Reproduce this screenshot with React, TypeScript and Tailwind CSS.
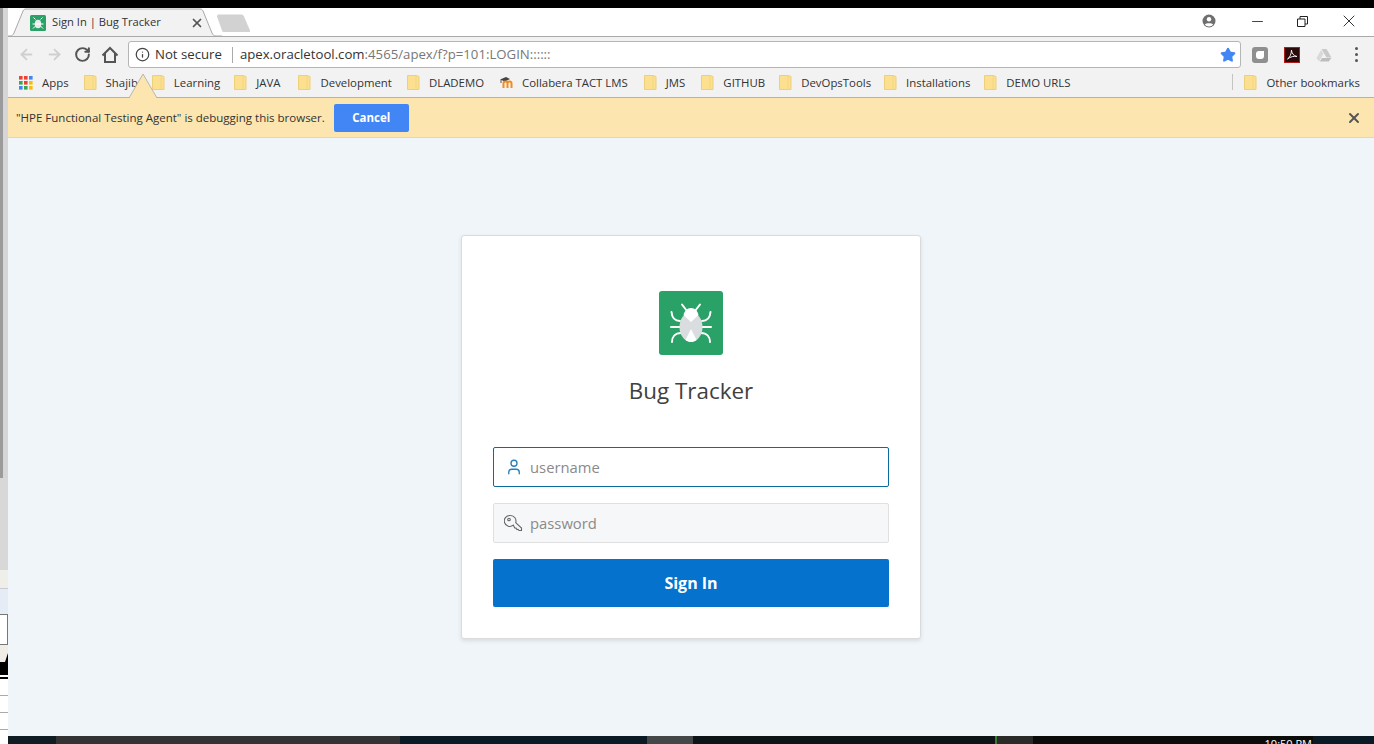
import { ArrowLeft, ArrowRight, Info, Minus, RotateCw, Star, User, X } from 'lucide-react';

const sans = 'font-["Open_Sans","Noto_Sans",sans-serif]';

const Folder = () => (
  <svg width="13" height="15" viewBox="0 0 13 15" className="shrink-0">
    <path d="M.5.5h8.500l3 1v13H.5z" fill="#fde08f" stroke="#ecd07c" />
    <path d="M9 1v13" stroke="#f3d680" fill="none" />
  </svg>
);

const AppsIcon = () => {
  const colors = ['#ea4335', '#ea4335', '#4285f4', '#34a853', '#ea4335', '#fbbc05', '#4285f4', '#34a853', '#fbbc05'];
  return (
    <svg width="14" height="14" viewBox="0 0 14 14" className="shrink-0">
      {colors.map((c, i) => (
        <rect key={i} x={(i % 3) * 5} y={Math.floor(i / 3) * 5} width="3.6" height="3.6" fill={c} />
      ))}
    </svg>
  );
};

const MoodleIcon = () => (
  <svg width="16" height="13" viewBox="0 0 16 13" className="shrink-0">
    <path d="M1 3.500 7 1l4 2-5 2.500z" fill="#444" />
    <path d="M2 4v3" stroke="#555" fill="none" />
    <path d="M4.500 12V7.500a2 2 0 0 1 4 0V12M8.500 7.500a2 2 0 0 1 4 0V12" stroke="#f28c1e" strokeWidth="2" fill="none" />
  </svg>
);

const BugLogo = () => (
  <svg width="64" height="64" viewBox="0 0 64 64" className="block">
    <rect width="64" height="64" rx="3" fill="#2aa167" />
    <g stroke="#fff" strokeWidth="2" fill="none" strokeLinecap="round">
      <path d="M28 20l-5-6.500M36 20l5-6.500" />
      <path d="M21 30c-5 0-8-3-8.500-9M43 30c5 0 8-3 8.500-9" />
      <path d="M12 36h9M43 36h9" />
      <path d="M13 51c0-5 3-9 9-9M51 51c0-5-3-9-9-9" />
    </g>
    <ellipse cx="32" cy="36" rx="11.500" ry="15" fill="#dadde0" />
    <path d="M32 17c-4 0-6.500 3-7.500 7l7.500 7 7.500-7c-1-4-3.500-7-7.500-7z" fill="#fff" />
    <path d="M32 38l-5.500 11c2 1.500 3.500 2 5.500 2s3.500-.5 5.500-2z" fill="#fff" />
  </svg>
);

const bookmarksBefore = [
  ['Shajib', 'pl-[15px]'],
  ['Learning', 'pl-[14px]'],
  ['JAVA', 'pl-[14px]'],
  ['Development', 'pl-[18px]'],
  ['DLADEMO', 'pl-[15px]'],
];

const bookmarksAfter = [
  ['JMS', 'pl-[16px]'],
  ['GITHUB', 'pl-[16px]'],
  ['DevOpsTools', 'pl-[14px]'],
  ['Installations', 'pl-[13px]'],
  ['DEMO URLS', 'pl-[14px]'],
];

export default function App() {
  return (
    <div className={`w-[1374px] h-[744px] flex flex-col overflow-hidden bg-white ${sans}`}>
      <div className="h-2 bg-black shrink-0" />
      <div className="flex-1 flex min-h-0">
        {/* sliver of the window behind */}
        <div className="w-2 shrink-0 flex flex-col">
          <div className="h-[470px] bg-[#d6d6d6] border-l-[3px] border-[#9b9b9b]" />
          <div className="h-[92px] bg-[#d8d8d8]" />
          <div className="h-[18px] bg-[#efeee8]" />
          <div className="h-[26px] bg-[#e6ecf6] border-t border-[#c8ccd4]" />
          <div className="h-[31px] bg-white border border-l-0 border-[#777]" />
          <div className="h-[17px] bg-[#f1ece6] flex justify-end items-end">
            <div className="w-0 h-0 border-l-[3px] border-r-0 border-b-[9px] border-l-transparent border-b-black" />
          </div>
          <div className="h-[13px] bg-black" />
          <div className="h-[2px] bg-white" />
          <div className="h-[2px] bg-black" />
          <div className="h-[17px] bg-white border-b border-[#aaa]" />
          <div className="h-[17px] bg-white border-b border-[#aaa]" />
          <div className="h-[17px] bg-white border-b border-[#aaa]" />
          <div className="flex-1 bg-white" />
        </div>

        <div className="flex-1 flex flex-col min-w-0">
          {/* tab strip */}
          <div className="h-[29px] shrink-0 flex items-end border-b border-[#a9a9a9] bg-white relative">
            <div className="relative w-[214px] h-[29px] -mb-px flex items-center pl-[22px] pr-[18px] shrink-0">
              <svg width="214" height="29" viewBox="0 0 214 29" className="absolute left-0 top-0">
                <path d="M0 28h2c2 0 3-1 4-3L15 3c.7-1.500 1.500-2 3-2h174c1.500 0 2.300.5 3 2l9 22c1 2 2 3 4 3h6" fill="#f2f2f2" stroke="#a9a9a9" />
              </svg>
              <svg width="16" height="16" viewBox="0 0 64 64" className="relative shrink-0">
                <rect width="64" height="64" rx="6" fill="#2aa167" />
                <ellipse cx="32" cy="36" rx="13" ry="17" fill="#e8eaec" />
                <path d="M22 18l-8-8M42 18l8-8M10 36h44M12 54l10-10M52 54 42 44" stroke="#fff" strokeWidth="4" />
              </svg>
              <span className="relative ml-[6px] text-[11.2px] text-[#333] flex-1 whitespace-nowrap">Sign In | Bug Tracker</span>
              <X className="relative w-[14px] h-[14px] text-[#555]" strokeWidth={3} />
            </div>
            <svg width="36" height="18" viewBox="0 0 36 18" className="ml-[-6px] mb-[4px] shrink-0">
              <path d="M1 2.500C1 1 2 .5 3 .5h22c1.500 0 2.200.5 3 2l6 14c.3 1 0 1.500-1 1.500H8c-1 0-1.500-.5-2-1.500z" fill="#d2d2d2" />
            </svg>
            <div className="flex-1 self-stretch flex items-center justify-end">
              <svg width="14" height="14" viewBox="0 0 14 14" className="mr-[33px] mb-[2px]">
                <circle cx="7" cy="7" r="6.500" fill="#6f6f6f" />
                <circle cx="7" cy="5.200" r="2.200" fill="#fff" />
                <path d="M2.800 10.500c1.200-1.800 7.200-1.800 8.400 0-1 1.200-2.500 2-4.200 2s-3.200-.8-4.200-2z" fill="#fff" />
              </svg>
              <Minus className="w-[17px] h-[17px] mr-[31px] mb-[2px] text-[#222]" strokeWidth={1.2} absoluteStrokeWidth />
              <svg width="11" height="11" viewBox="0 0 11 11" className="mr-[31px] mb-[2px]">
                <path d="M.5 3h7.500v7.500H.5zM3 3V.5h7.500V8H8" fill="none" stroke="#222" />
              </svg>
              <X className="w-[20px] h-[20px] mr-[15px] mb-[2px] text-[#222]" strokeWidth={1.1} absoluteStrokeWidth />
            </div>
          </div>

          {/* toolbar */}
          <div className="h-[33px] shrink-0 bg-[#f2f2f2] flex items-center pl-[10px] pt-[2px]">
            <ArrowLeft className="w-[17px] h-[17px] text-[#cfcfcf]" strokeWidth={2.5} />
            <ArrowRight className="w-[17px] h-[17px] ml-[11px] text-[#cfcfcf]" strokeWidth={2.5} />
            <RotateCw className="w-[17px] h-[17px] ml-[11px] text-[#555]" strokeWidth={2.8} />
            <svg width="18" height="18" viewBox="0 0 18 18" className="ml-[10px] shrink-0">
              <path d="M1.500 9.500 9 2l7.500 7.500M4 7.500V16h10V7.500" fill="none" stroke="#555" strokeWidth="2" />
            </svg>
            <div className="ml-[9px] w-[1113px] h-[27px] bg-white border border-[#b5b5b5] rounded-[3px] flex items-center pl-[6px] pr-[4px] shrink-0">
              <Info className="w-[15px] h-[15px] text-[#444]" strokeWidth={2} />
              <span className="ml-[5px] text-[13.2px] text-[#333]">Not secure</span>
              <span className="ml-[10px] w-px h-[16px] bg-[#aaa]" />
              <span className="ml-[7px] text-[13.2px] text-[#333] whitespace-nowrap">
                apex.oracletool.com<span className="text-[#777]">:4565/apex/f?p=101:LOGIN::::::</span>
              </span>
              <Star className="ml-auto w-[16px] h-[16px] text-[#4285f4] fill-[#4285f4]" />
            </div>
            <div className="ml-[11px] w-[16px] h-[16px] rounded-[3px] bg-[#8f8f8f] flex items-center justify-center">
              <div className="w-[8px] h-[8px] bg-white rounded-[3px] rounded-tr-none" />
            </div>
            <svg width="16" height="16" viewBox="0 0 16 16" className="ml-[16px]">
              <rect x=".5" y=".5" width="15" height="15" fill="#2a0a0a" stroke="#b01c1c" />
              <path d="M3.500 12c2-1 4-5 4-9 0 3 2 6 5.500 6.500-3-.5-6.500 0-9.500 2.500z" fill="none" stroke="#eee" strokeWidth="1" />
            </svg>
            <svg width="16" height="14" viewBox="0 0 16 14" className="ml-[16px]">
              <path d="M5.500 1h5l5 8.500h-5z" fill="#c9c9c9" />
              <path d="M5 2 .500 10l2.500 3.500L7.500 5.500z" fill="#d9d9d9" />
              <path d="M3.800 13.500h9l2.500-3.500H6z" fill="#bdbdbd" />
            </svg>
            <div className="ml-[23px] flex flex-col gap-[3px]">
              <span className="w-[3px] h-[3px] rounded-full bg-[#555]" />
              <span className="w-[3px] h-[3px] rounded-full bg-[#555]" />
              <span className="w-[3px] h-[3px] rounded-full bg-[#555]" />
            </div>
          </div>

          {/* bookmarks bar */}
          <div className="h-[28px] shrink-0 bg-[#f2f2f2] border-b border-[#b2b2b2] flex items-center pl-[11px] pb-[2px] text-[11.4px] text-[#333] whitespace-nowrap">
            <AppsIcon />
            <span className="ml-[9px]">Apps</span>
            {bookmarksBefore.map(([label, gap]) => (
              <div key={label} className={`flex items-center gap-[9px] ${gap}`}>
                <Folder />
                <span>{label}</span>
              </div>
            ))}
            <div className="flex items-center gap-[7px] pl-[15px]">
              <MoodleIcon />
              <span>Collabera TACT LMS</span>
            </div>
            {bookmarksAfter.map(([label, gap]) => (
              <div key={label} className={`flex items-center gap-[9px] ${gap}`}>
                <Folder />
                <span>{label}</span>
              </div>
            ))}
            <div className="ml-auto flex items-center pr-[14px]">
              <span className="w-px h-[16px] bg-[#c4c4c4] mr-[11px]" />
              <Folder />
              <span className="ml-[9px]">Other bookmarks</span>
            </div>
          </div>

          {/* debugging infobar */}
          <div className="h-[40px] shrink-0 bg-[#fce5ae] border-b border-[#d9d9c9] flex items-center pl-2 pr-[12px] relative">
            <svg width="28" height="25" viewBox="0 0 28 25" className="absolute left-[121px] top-[-25px]">
              <path d="M0 25 14 1l14 24z" fill="#fce5ae" stroke="#b8b8a8" />
              <path d="M1 25h26v-1H1z" fill="#fce5ae" />
            </svg>
            <span className="text-[11.5px] text-[#333]">"HPE Functional Testing Agent" is debugging this browser.</span>
            <button className="ml-[9px] w-[75px] h-[28px] rounded-[2px] bg-[#4285f4] text-white text-[11.5px] font-bold">Cancel</button>
            <X className="ml-auto w-[16px] h-[16px] text-[#555]" strokeWidth={3} />
          </div>

          {/* login page */}
          <div className="flex-1 min-h-0 bg-[#f0f5f9] flex items-center justify-center">
            <div className="w-[460px] h-[404px] bg-white border border-[#d9dbdd] rounded-[3px] shadow-[0_2px_4px_rgba(0,0,0,0.1)] px-[31px] pt-[55px] flex flex-col items-center">
              <BugLogo />
              <h1 className="mt-[20px] h-[32px] leading-[32px] text-[22.4px] text-[#404040]">Bug Tracker</h1>
              <div className="mt-[40px] w-full h-[40px] border border-[#0b6a9e] rounded-[2px] bg-white flex items-center pl-[11px]">
                <User className="w-[18px] h-[18px] text-[#2b7fb8] shrink-0" strokeWidth={1.8} />
                <input className="ml-[7px] flex-1 outline-none bg-transparent text-[14.8px] placeholder:text-[#8a8a8a]" placeholder="username" />
              </div>
              <div className="mt-[16px] w-full h-[40px] border border-[#e0e0e0] rounded-[2px] bg-[#f6f7f8] flex items-center pl-[10px]">
                <svg width="19" height="19" viewBox="0 0 19 19" className="shrink-0">
                  <g fill="none" stroke="#666" strokeWidth="1.1">
                    <path d="M6.500 1.500a5.500 5.500 0 0 1 5.200 7.200l5.800 5.300v2.500h-2.500l-1-1.200-1.200.2-.8-1.400-1.200-.1-1.500-2.800A5.500 5.500 0 1 1 6.500 1.500z" />
                    <circle cx="5" cy="5.500" r="1.300" />
                  </g>
                </svg>
                <input className="ml-[7px] flex-1 outline-none bg-transparent text-[14.8px] placeholder:text-[#8a8a8a]" placeholder="password" />
              </div>
              <button className="mt-[16px] w-full h-[48px] rounded-[2px] bg-[#0572ce] text-white text-base font-bold">Sign In</button>
            </div>
          </div>

          {/* desktop taskbar peeking in */}
          <div className="h-2 shrink-0 flex overflow-hidden bg-[#0a1a24]">
            <div className="w-[48px] bg-[#0f1c24]" />
            <div className="w-[344px] bg-[#333333]" />
            <div className="w-[247px] bg-[#0a1a24]" />
            <div className="w-[46px] bg-[#444748]" />
            <div className="w-[302px] bg-[#0c1418]" />
            <div className="w-[2px] bg-[#3c7a35]" />
            <div className="w-[36px] bg-[#2a2a28]" />
            <div className="w-[280px] bg-[#0b0b0a] text-right text-white text-[11px] leading-[14px] pt-px pr-px whitespace-nowrap">10:50 PM</div>
            <div className="flex-1 bg-[#0a1a24]" />
          </div>
        </div>
      </div>
    </div>
  );
}
